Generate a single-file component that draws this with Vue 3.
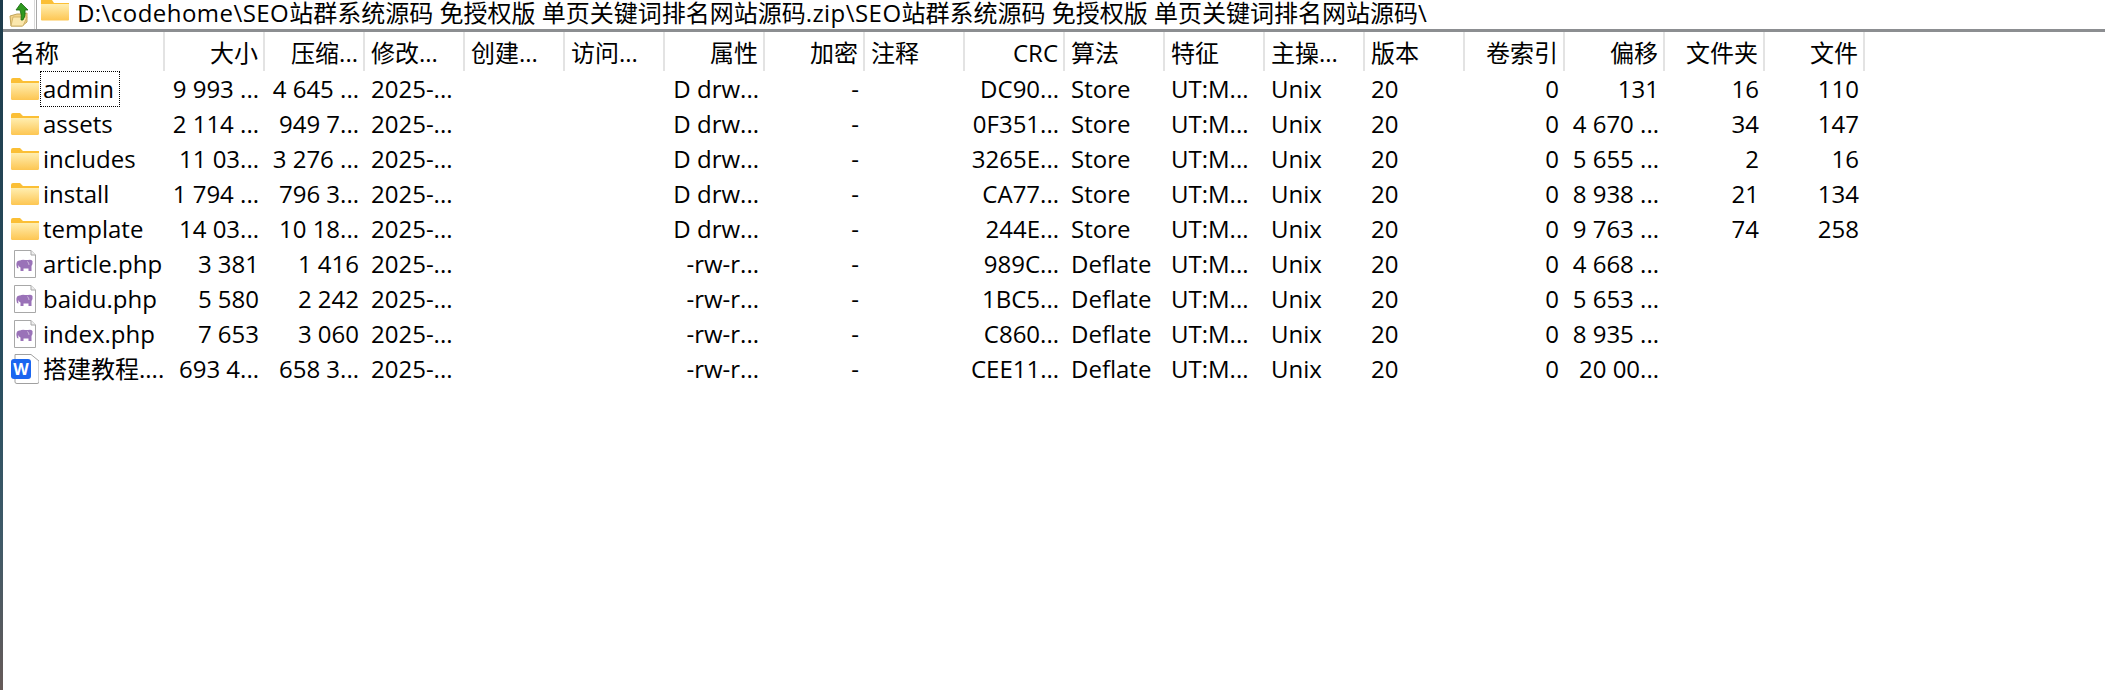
<script setup>
const columns = [
  { label: '名称', width: 162, align: 'left' },
  { label: '大小', align: 'right' },
  { label: '压缩...', align: 'right' },
  { label: '修改...', align: 'left' },
  { label: '创建...', align: 'left' },
  { label: '访问...', align: 'left' },
  { label: '属性', align: 'right' },
  { label: '加密', align: 'right' },
  { label: '注释', align: 'left' },
  { label: 'CRC', align: 'right' },
  { label: '算法', align: 'left' },
  { label: '特征', align: 'left' },
  { label: '主操...', align: 'left' },
  { label: '版本', align: 'left' },
  { label: '卷索引', align: 'right' },
  { label: '偏移', align: 'right' },
  { label: '文件夹', align: 'right' },
  { label: '文件', align: 'right' }
]

const rows = [
  ['folder', 'admin', '9 993 ...', '4 645 ...', '2025-...', '', '', 'D drw...', '-', '', 'DC90...', 'Store', 'UT:M...', 'Unix', '20', '0', '131', '16', '110'],
  ['folder', 'assets', '2 114 ...', '949 7...', '2025-...', '', '', 'D drw...', '-', '', '0F351...', 'Store', 'UT:M...', 'Unix', '20', '0', '4 670 ...', '34', '147'],
  ['folder', 'includes', '11 03...', '3 276 ...', '2025-...', '', '', 'D drw...', '-', '', '3265E...', 'Store', 'UT:M...', 'Unix', '20', '0', '5 655 ...', '2', '16'],
  ['folder', 'install', '1 794 ...', '796 3...', '2025-...', '', '', 'D drw...', '-', '', 'CA77...', 'Store', 'UT:M...', 'Unix', '20', '0', '8 938 ...', '21', '134'],
  ['folder', 'template', '14 03...', '10 18...', '2025-...', '', '', 'D drw...', '-', '', '244E...', 'Store', 'UT:M...', 'Unix', '20', '0', '9 763 ...', '74', '258'],
  ['php', 'article.php', '3 381', '1 416', '2025-...', '', '', '-rw-r...', '-', '', '989C...', 'Deflate', 'UT:M...', 'Unix', '20', '0', '4 668 ...', '', ''],
  ['php', 'baidu.php', '5 580', '2 242', '2025-...', '', '', '-rw-r...', '-', '', '1BC5...', 'Deflate', 'UT:M...', 'Unix', '20', '0', '5 653 ...', '', ''],
  ['php', 'index.php', '7 653', '3 060', '2025-...', '', '', '-rw-r...', '-', '', 'C860...', 'Deflate', 'UT:M...', 'Unix', '20', '0', '8 935 ...', '', ''],
  ['word', '搭建教程....', '693 4...', '658 3...', '2025-...', '', '', '-rw-r...', '-', '', 'CEE11...', 'Deflate', 'UT:M...', 'Unix', '20', '0', '20 00...', '', '']
]
</script>

<template>
  <div class="window">
    <div class="strip"></div>
    <div class="content">
      <div class="toolbar">
        <div class="up-button">
          <svg width="22" height="26" viewBox="0 0 22 26">
            <path d="M2 14 L9 12 H16 L19 11 V20 L14 24 H3 Z" fill="#f3d488" stroke="#c0a35a" />
            <path d="M3 24 L5 15 H19 L15 24 Z" fill="#fbe7ad" stroke="#c9aa5c" stroke-width="0.8" />
            <path d="M13 1 L20 8 H17 Q18 14 15 18 L13 18 Q14 13 12 8 H8 Z" fill="#2f9a1f" stroke="#16660f" stroke-width="0.8" />
          </svg>
        </div>
        <div class="path-field">
          <svg class="path-folder" width="28" height="21" viewBox="0 0 28 21">
            <defs>
              <linearGradient id="pathGradient" x1="0" y1="0" x2="0" y2="1">
                <stop offset="0" stop-color="#ffeeb0" />
                <stop offset="1" stop-color="#fdc652" />
              </linearGradient>
            </defs>
            <path d="M0 0 H11 L13 3 H28 V19 Q28 20 27 20 H1 Q0 20 0 19 Z" fill="#fbbf35" />
            <path d="M0 4 H28 V19 Q28 20.500 27 20.500 H1 Q0 20.500 0 19 Z" fill="url(#pathGradient)" />
          </svg>
          <span class="path-text"><span class="path-latin">D:\codehome\SEO</span>站群系统源码 免授权版 单页关键词排名网站源码<span class="path-latin">.zip\SEO</span>站群系统源码 免授权版 单页关键词排名网站源码\</span>
        </div>
      </div>
      <div class="header">
        <div
          v-for="col in columns"
          :key="col.label"
          class="head-cell"
          :class="[col.align, { first: col.width }]"
        >{{ col.label }}</div>
      </div>
      <div class="body">
        <div v-for="(row, r) in rows" :key="row[1]" class="row">
          <div class="cell name">
            <svg v-if="row[0] === 'folder'" class="icon" width="28" height="22" viewBox="0 0 28 22">
              <defs>
                <linearGradient :id="`folderGrad${r}`" x1="0" y1="0" x2="0" y2="1">
                  <stop offset="0" stop-color="#ffeeb0" />
                  <stop offset="1" stop-color="#fdc652" />
                </linearGradient>
              </defs>
              <path d="M0 2 Q0 0 2 0 H9 L12 3 H28 V20 Q28 21 27 21 H1 Q0 21 0 20 Z" fill="#fbbf35" />
              <path d="M0 5 H28 V20 Q28 22 27 22 H1 Q0 22 0 20 Z" :fill="`url(#folderGrad${r})`" />
            </svg>
            <svg v-else-if="row[0] === 'php'" class="icon" width="28" height="28" viewBox="0 0 28 28">
              <path d="M3.500 0.500 H20 L24.500 5 V27.500 H3.500 Z" fill="#fff" stroke="#a8a8a8" />
              <path d="M20 0.500 V5 H24.500" fill="#eee" stroke="#a8a8a8" />
              <path d="M5.500 13 Q6 10 9 10.500 Q11 9.500 14 10 L17 10 Q20 9 21.500 11 Q22 14 20.500 16 V21 H17.500 V18.500 H12.500 V21 H9.500 V17.500 Q8 17 7.500 15 Q7 17 7.500 18.500 L6 18 Q5 15 5.500 13 Z" fill="#9a72b8" />
              <path d="M16 11.500 Q18 12 18 15" fill="none" stroke="#fff" stroke-width="0.8" opacity="0.6" />
            </svg>
            <svg v-else class="icon" width="28" height="30" viewBox="0 0 28 30">
              <path d="M4 0.500 H20 L28 7 V28 Q28 29.500 26 29.500 H6 Q4 29.500 4 28 Z" fill="#fff" stroke="#a0a0a0" />
              <rect x="0" y="5" width="20" height="20" rx="3" fill="#1a66f0" />
              <text x="10" y="20.500" class="word-letter">W</text>
            </svg>
            <span class="name-text" :class="{ focused: r === 0 }">{{ row[1] }}</span>
          </div>
          <div
            v-for="(value, c) in row.slice(2)"
            :key="c"
            class="cell"
            :class="columns[c + 1].align"
          >{{ value }}</div>
        </div>
      </div>
    </div>
  </div>
</template>

<style>
html, body { margin: 0; background: #fff; }
</style>

<style scoped>
.window {
  width: 2105px;
  height: 690px;
  display: flex;
  background: #fff;
  color: #000;
  font-family: "Open Sans", "Noto Sans CJK SC", sans-serif;
  font-size: 24px;
  overflow: hidden;
}
.strip {
  flex: none;
  width: 3px;
  background: linear-gradient(#1d3b4b 0%, #2a4f60 55%, #3f5a68 78%, #665a58 100%);
}
.content { flex: 1; min-width: 0; }
.toolbar {
  height: 29px;
  display: flex;
  border-bottom: 3px solid #8c8e91;
}
.up-button {
  width: 32px;
  display: flex;
  align-items: center;
  justify-content: center;
  border-right: 1px solid #d9d9d9;
  box-sizing: border-box;
}
.path-field {
  flex: 1;
  display: flex;
  align-items: flex-start;
  gap: 8px;
  border-left: 1px solid #a8a8a8;
  margin-left: 1px;
  padding-left: 4px;
}
.path-folder { flex: none; }
.path-text { line-height: 26px; white-space: nowrap; }
.path-latin { letter-spacing: 0.45px; }
.header {
  display: flex;
  height: 39px;
}
.head-cell {
  flex: none;
  width: 100px;
  box-sizing: border-box;
  border-right: 2px solid #e3e3e3;
  padding: 0 5px 0 6px;
  line-height: 41px;
  white-space: nowrap;
  overflow: hidden;
}
.head-cell.first { width: 162px; padding-left: 8px; }
.row {
  display: flex;
  height: 35px;
}
.cell {
  flex: none;
  width: 100px;
  box-sizing: border-box;
  padding: 0 6px 0 6px;
  line-height: 35px;
  white-space: nowrap;
  overflow: hidden;
}
.left { text-align: left; }
.right { text-align: right; }
.name {
  width: 162px;
  display: flex;
  align-items: center;
  padding: 0 0 0 8px;
  overflow: visible;
}
.icon { flex: none; }
.name-text {
  margin-left: 4px;
  height: 34px;
  line-height: 34px;
  box-sizing: border-box;
}
.name-text.focused {
  outline: 1px dotted #000;
  padding: 0 5px 0 2px;
  margin-left: 2px;
}
.word-letter {
  font-family: "Open Sans", sans-serif;
  font-size: 16px;
  font-weight: 700;
  fill: #fff;
  text-anchor: middle;
}
</style>
